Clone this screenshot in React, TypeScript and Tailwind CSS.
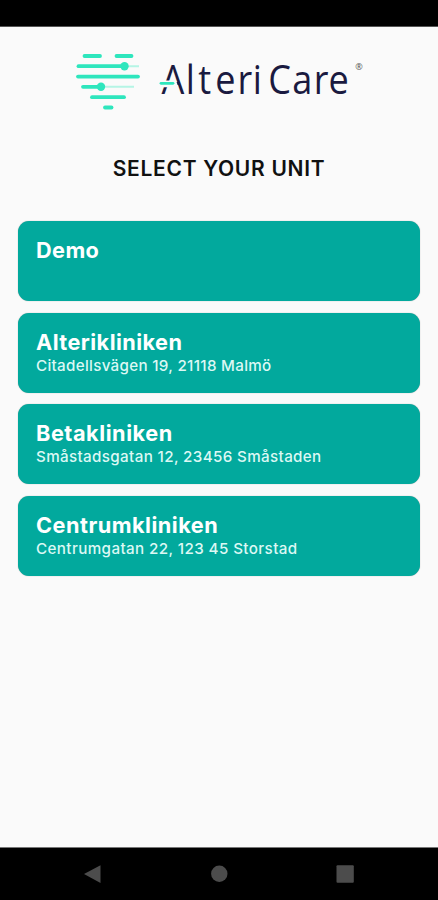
const units = [
  { name: "Demo", address: "", nameClass: "tracking-[0.4px]", addressClass: "" },
  {
    name: "Alterikliniken",
    address: "Citadellsvägen 19, 21118 Malmö",
    nameClass: "tracking-[0.45px]",
    addressClass: "tracking-[0.3px]",
  },
  {
    name: "Betakliniken",
    address: "Småstadsgatan 12, 23456 Småstaden",
    nameClass: "tracking-[0.55px]",
    addressClass: "tracking-[0.35px]",
  },
  {
    name: "Centrumkliniken",
    address: "Centrumgatan 22, 123 45 Storstad",
    nameClass: "tracking-[0.5px]",
    addressClass: "tracking-[0.39px]",
  },
];

function Logo() {
  return (
    <svg className="block h-[70px] w-[300px]" viewBox="70 45 300 70" fill="none">
      {/* heart made of slider bars */}
      <g stroke="#2ee6bd" strokeWidth="3.8" strokeLinecap="round">
        <path d="M84.5 56h15.5M116.5 56h15" />
        <path d="M78.5 66.2h46" />
        <path d="M78 76.6h60" />
        <path d="M83 86.8h18" />
        <path d="M92 97.2h32" />
        <path d="M105 107.5h6.5" />
      </g>
      <path d="M127 66.2h12M103 86.8h31" stroke="#b5f5e5" strokeWidth="2" />
      <circle cx="124.5" cy="66.2" r="4.2" fill="#2ee6bd" />
      <circle cx="101" cy="86.8" r="4.2" fill="#2ee6bd" />

      <g
        className="font-['Open_Sans',sans-serif]"
        fill="#1a1a40"
        fontSize="41"
        transform="scale(0.88 1)"
      >
        <text x="183.5 211.2 225.4 244.6 269.8 287.2" y="94.5">Alteri</text>
        <text x="304.9 332 356.6 373.4" y="94.5">Care</text>
      </g>
      {/* the crossbar of the A is a green dash that cuts its left leg */}
      <path d="M160 80.5H176.1L178.3 87.2H160z" fill="#fafafa" />
      <path d="M161 83.3h12" stroke="#2ee6bd" strokeWidth="2.8" strokeLinecap="round" />
      <text x="355.3" y="69.5" fontSize="9" fill="#555555" className="font-['Open_Sans',sans-serif]">
        ®
      </text>
    </svg>
  );
}

export default function App() {
  return (
    <div className="flex h-[900px] w-full flex-col bg-black font-['Inter',sans-serif]">
      <div className="h-[27px] shrink-0 border-b border-[#555555]"></div>

      <main className="flex flex-1 flex-col bg-[#fafafa] px-[18px] pt-[18px]">
        <div className="pl-[52px]">
          <Logo />
        </div>
        <h1 className="mt-[40px] text-center text-[21px] leading-7 font-semibold tracking-[0.7px] text-[#111111]">
          SELECT YOUR UNIT
        </h1>

        <div className="mt-[38.4px] flex flex-col gap-[11.7px]">
          {units.map((unit) => (
            <button
              key={unit.name}
              className="flex h-[79.8px] flex-col items-start rounded-[11px] bg-[#02a99d] px-[18px] pt-4 text-left text-white shadow-[0_0_1px_rgba(0,0,0,0.4)]"
            >
              <span className={`text-[21.7px] leading-[26px] font-bold whitespace-nowrap ${unit.nameClass}`}>
                {unit.name}
              </span>
              <span
                className={`text-[15.2px] leading-[22px] font-medium whitespace-nowrap text-[#dcf8f4] ${unit.addressClass}`}
              >
                {unit.address}
              </span>
            </button>
          ))}
        </div>
      </main>

      <nav className="h-[53px] shrink-0 border-t border-[#777777]">
        <svg className="block h-[52px] w-full" viewBox="0 848 438 52" fill="#4c4c4c">
          <path d="M84 874L100.5 865.2V883z" />
          <circle cx="219.3" cy="873.7" r="8.2" />
          <rect x="336.5" y="865.3" width="17.3" height="17.5" rx="1" />
        </svg>
      </nav>
    </div>
  );
}
